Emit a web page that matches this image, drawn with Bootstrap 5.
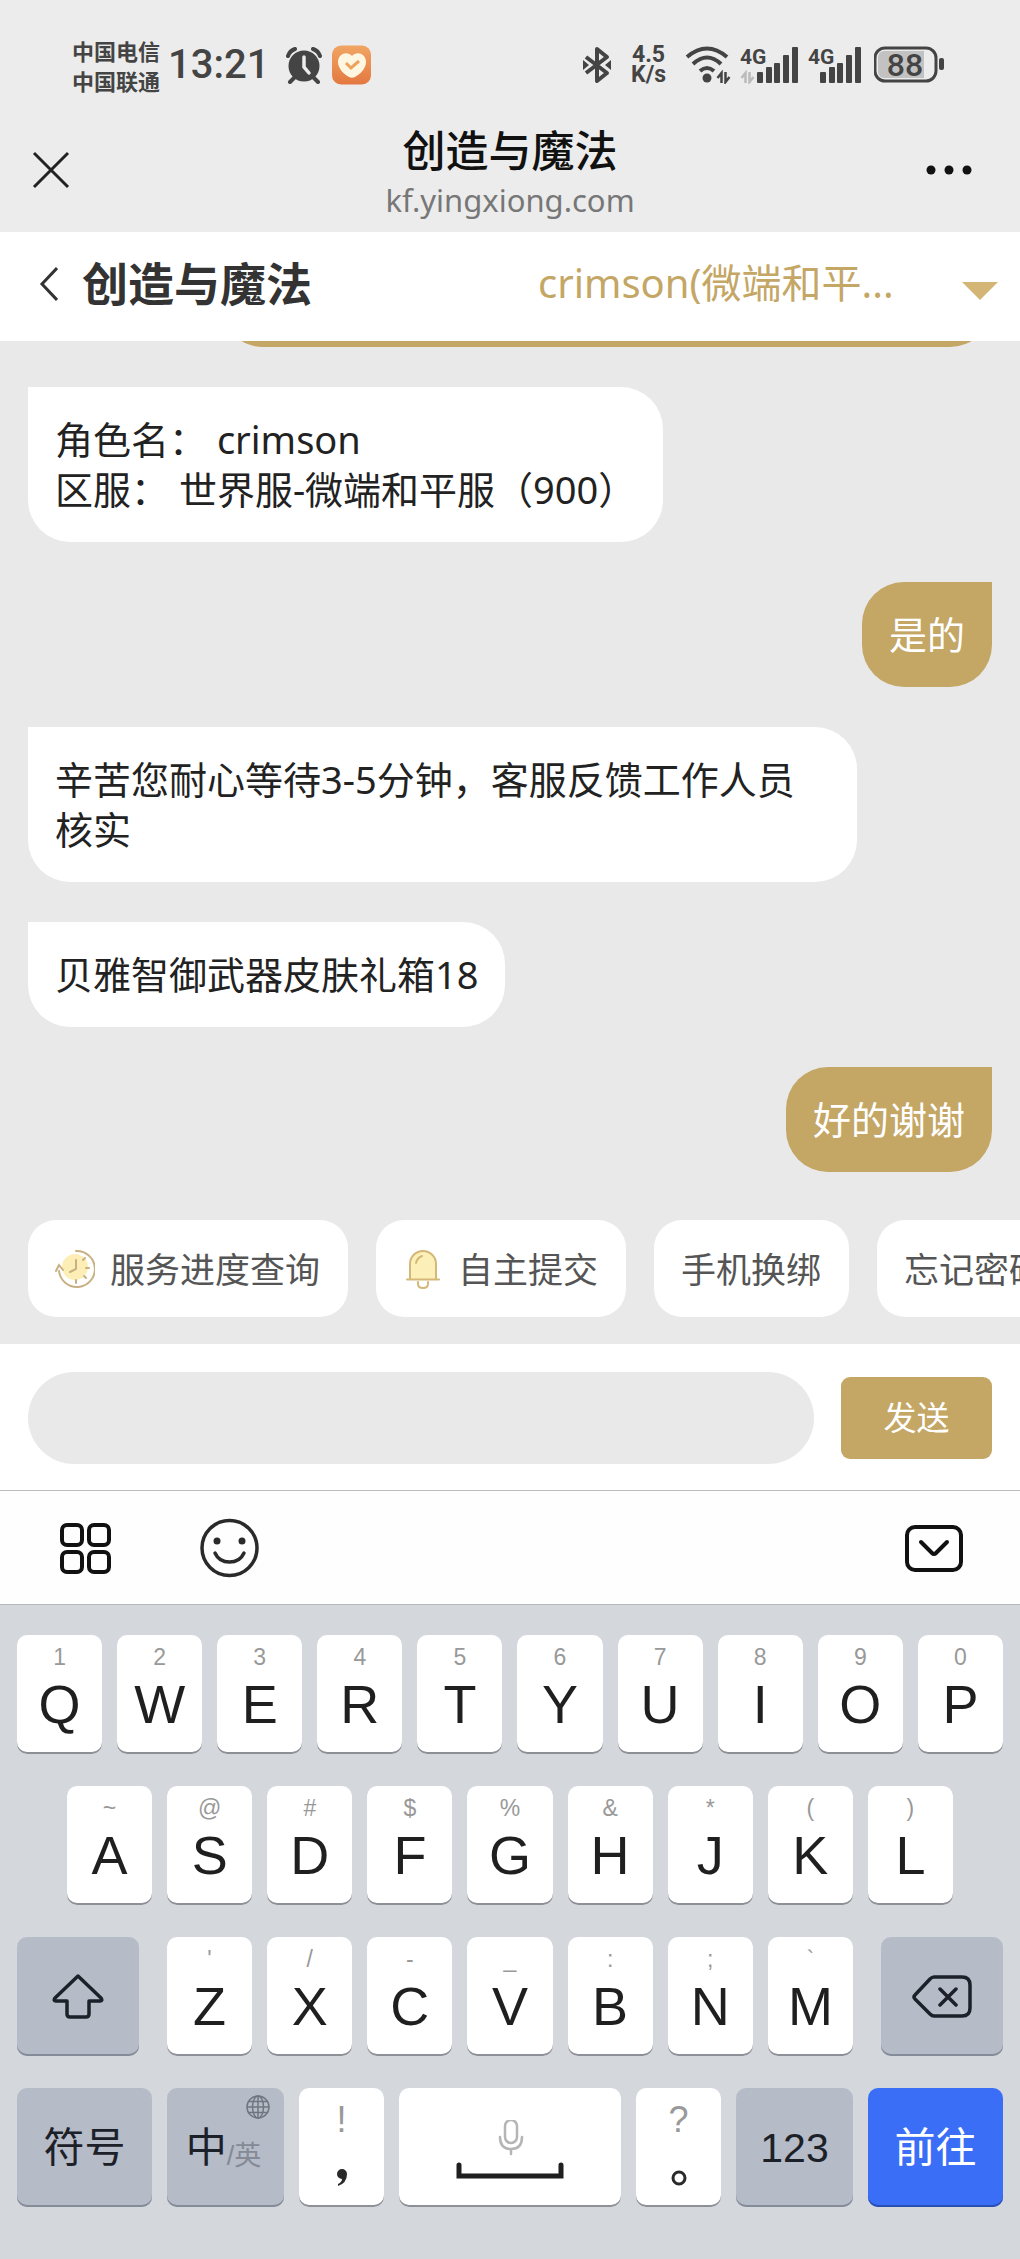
<!DOCTYPE html>
<html lang="zh-CN">
<head>
<meta charset="utf-8">
<meta name="viewport" content="width=device-width, initial-scale=1">
<title>创造与魔法</title>
<link href="https://cdn.jsdelivr.net/npm/bootstrap@5.3.0/dist/css/bootstrap.min.css" rel="stylesheet">
<style>
  :root { --gold: #c4a665; --page: #e9e9e9; --ink: #222; }
  body { font-family: "Noto Sans", "Noto Sans CJK SC", sans-serif; background: #d4d8dc; color: var(--ink); }
  svg { display: block; flex: none; }
  button { font-family: inherit; }
  .bare { background: none; border: 0; padding: 0; }

  .top-area { background: #ececec; }
  .status { height: 92px; padding: 38px 72px 0; color: #444; }
  .carriers { font-size: 22px; line-height: 30px; font-weight: 700; font-family: "Noto Sans CJK SC", sans-serif; }
  .time { font-family: Roboto, sans-serif; font-size: 40px; font-weight: 500; line-height: 54px; }
  .speed { font-family: Roboto, sans-serif; font-size: 23px; line-height: 20px; font-weight: 700; margin: 0 18px; }
  .cell { margin-left: 8px; }
  .battery { margin-left: 10px; }
  .titlebar { padding: 16px 48px 0 32px; height: 140px; }
  .titlebar h1 { font-size: 43px; line-height: 56px; margin: 0 0 4px; color: #111; font-weight: 400; font-family: "Noto Sans CJK SC", sans-serif; }
  .titlebar p { font-size: 31px; line-height: 40px; margin: 0; color: #777; }
  .close-page { width: 62px; }

  .game-bar { height: 109px; padding: 0 22px 8px 38px; }
  .game-bar h2 { font-size: 46px; line-height: 64px; font-weight: 700; color: #333; margin: 0; }
  .role-select { appearance: none; border: 0; background: none; color: var(--gold); font-size: 40px; line-height: 60px; padding: 0; width: 356px; }

  .chat { background: var(--page); padding: 0 28px 27px; overflow: hidden; }
  .bubbles { gap: 40px; }
  .bubble { background: #fff; border-radius: 0 42px 42px 42px; padding: 27px 27px 28px; font-size: 38px; line-height: 50px; max-width: 86%; align-self: flex-start; white-space: pre-wrap; }
  .bubble.mine { background: var(--gold); color: #fff; border-radius: 42px 0 42px 42px; align-self: flex-end; }
  .bubble.passed { width: 80%; height: 105px; margin-top: -99px; }

  .chips { gap: 28px; margin: 48px -28px 0 0; overflow: hidden; }
  .chip { background: #fff; border: 0; border-radius: 28px; padding: 0 28px 0 27px; height: 97px; font-family: "Noto Sans CJK SC", sans-serif; font-size: 35px; color: #555; gap: 15px; white-space: nowrap; flex: none; }

  .composer { background: #fff; padding: 28px 28px 26px; gap: 27px; border-bottom: 1px solid #bbb; }
  .composer .form-control { background: #e9e9e9; border: 0; height: 92px; font-size: 36px; padding: 0 40px; }
  .send { background: var(--gold); color: #fff; border: 0; border-radius: 9px; width: 151px; height: 82px; font-size: 33px; flex: none; }

  .tools { background: #fefefe; height: 114px; padding: 0 56px; gap: 84px; border-bottom: 1px solid #b4b9bc; }

  .keyboard { background: #d4d8dc; padding: 30px 17px 51px; gap: 32px; font-family: "Liberation Sans", "Noto Sans CJK SC", sans-serif; }
  .krow { gap: 15px; }
  .inset { padding: 0 50px; }
  .wide-gap { gap: 28px; }
  .key { background: #fff; border: 0; border-radius: 10px; box-shadow: inset 0 -2px 0 #8d9096; height: 119px; padding: 10px 0 0; color: #1f1f1f; font-size: 54px; line-height: 50px; gap: 10px; flex: 85 1 0; min-width: 0; }
  .key small { font-size: 23px; line-height: 24px; height: 24px; color: #999; }
  .key.fn { background: #b5bbc7; color: #1c2028; font-size: 41px; padding: 0; box-shadow: inset 0 -2px 0 #858b98; }
  .key.go { background: #3b6ef6; color: #fff; box-shadow: inset 0 -2px 0 #2a4fb4; }
  .w122 { flex-grow: 122; } .w135 { flex-grow: 135; } .w117 { flex-grow: 117; } .w222 { flex-grow: 222; } .w686 { flex: 686 1 0; }
  .key .alt { font-size: 27px; color: #858a96; line-height: 40px; align-self: flex-end; margin: 0 4px 31px 0; }
  .globe { position: absolute; top: 7px; right: 14px; }
  .key.punct small { font-size: 36px; line-height: 40px; height: 40px; margin-top: 2px; }
</style>
</head>
<body>

<header class="top-area">
  <div class="status d-flex align-items-center justify-content-between">
    <div class="d-flex align-items-center">
      <div class="carriers">中国电信<br>中国联通</div>
      <div class="time ms-2 me-3">13:21</div>
      <svg width="38" height="38" viewBox="0 0 38 38" fill="#444"><circle cx="18" cy="20" r="15.500"/><path d="M2 10A11 11 0 0 1 9 3M34 10A11 11 0 0 0 27 3M8 32l-4 4M28 32l4 4" stroke="#444" stroke-width="4" fill="none" stroke-linecap="round"/><path d="M18 11v10l5 6" stroke="#ececec" stroke-width="3.500" fill="none" stroke-linecap="round"/></svg>
      <svg class="ms-2" width="40" height="40" viewBox="0 0 40 40"><defs><linearGradient id="og" x1="0" y1="0" x2="0" y2="1"><stop offset="0" stop-color="#f0a562"/><stop offset="1" stop-color="#e47840"/></linearGradient></defs><rect width="39" height="39" y="0.500" rx="9" fill="url(#og)"/><path d="M20 11c-4-5-14-3-14 6 0 7 7 13 11 15q3 1.500 6 0c4-2 11-8 11-15 0-9-10-11-14-6z" fill="#fff6e2"/><path d="M14 18l5 5 8-7" fill="none" stroke="#eda35c" stroke-width="3"/></svg>
    </div>
    <div class="d-flex align-items-center">
      <svg width="30" height="38" viewBox="0 0 30 38"><path d="M3 11l21 16-10 8V3l10 8L3 27" fill="none" stroke="#444" stroke-width="4" stroke-linejoin="round"/><path d="M0 14l6 5-6 5zM28 14l-6 5 6 5z" fill="#444"/></svg>
      <div class="speed text-center">4.5<br>K/s</div>
      <svg width="48" height="38" viewBox="0 0 48 38" fill="none" stroke="#444" stroke-width="4"><path d="M3 11Q23-6 43 11M9 18Q23 5 37 18M16 25Q23 19 30 25"/><circle cx="23" cy="32" r="4.500" fill="#444" stroke="none"/><path d="M37.500 37V27l-4 5M41.500 26v10l4-5" stroke-width="2.500"/></svg>
      <svg class="cell" width="60" height="38" viewBox="0 0 60 38" fill="#444"><text x="0" y="18" font-family="Roboto, sans-serif" font-size="21" font-weight="700">4G</text><rect x="17" y="26" width="6" height="11" rx="1"/><rect x="26" y="21" width="6" height="16" rx="1"/><rect x="34" y="17" width="6" height="20" rx="1"/><rect x="43" y="9" width="6" height="28" rx="1"/><rect x="52" y="1" width="6" height="36" rx="1"/><path d="M5.500 37V27l-4 5M9.500 26v10l4-5" fill="none" stroke="#bbb" stroke-width="2.500"/></svg>
      <svg class="cell" width="56" height="38" viewBox="0 0 56 38" fill="#444"><text x="0" y="18" font-family="Roboto, sans-serif" font-size="21" font-weight="700">4G</text><rect x="12" y="26" width="6" height="11" rx="1"/><rect x="21" y="21" width="6" height="16" rx="1"/><rect x="29" y="17" width="6" height="20" rx="1"/><rect x="38" y="9" width="6" height="28" rx="1"/><rect x="47" y="1" width="6" height="36" rx="1"/></svg>
      <svg class="battery" width="74" height="38" viewBox="0 0 74 38"><rect x="1" y="2" width="61" height="33" rx="10" fill="none" stroke="#444" stroke-width="3"/><path d="M10 5h40v27H10a6 6 0 0 1-6-6V11a6 6 0 0 1 6-6z" fill="#c2c2c2"/><rect x="65" y="12" width="5" height="12" rx="2" fill="#444"/><text x="31" y="30" text-anchor="middle" font-family="Roboto, sans-serif" font-size="32" font-weight="500" fill="#444">88</text></svg>
    </div>
  </div>
  <div class="titlebar d-flex align-items-center justify-content-between">
    <button class="bare close-page" aria-label="关闭"><svg width="38" height="38" viewBox="0 0 38 38"><path d="M2 2l34 34M36 2L2 36" stroke="#222" stroke-width="3"/></svg></button>
    <div class="text-center">
      <h1 class="fw-medium">创造与魔法</h1>
      <p>kf.yingxiong.com</p>
    </div>
    <button class="bare" aria-label="更多"><svg width="46" height="12" viewBox="0 0 46 12" fill="#111"><circle cx="5" cy="6" r="4.500"/><circle cx="23" cy="6" r="4.500"/><circle cx="41" cy="6" r="4.500"/></svg></button>
  </div>
</header>

<nav class="game-bar bg-white d-flex align-items-center justify-content-between">
  <div class="d-flex align-items-center gap-4">
    <button class="bare" aria-label="返回"><svg width="20" height="36" viewBox="0 0 20 36"><path d="M19 3L4 19l15 16" fill="none" stroke="#333" stroke-width="3"/></svg></button>
    <h2>创造与魔法</h2>
  </div>
  <div class="d-flex align-items-center">
    <select class="role-select" aria-label="角色"><option>crimson(微端和平...</option></select>
    <svg class="ms-5 mt-3" width="56" height="18" viewBox="0 0 56 18"><path d="M20 0h36L38 18z" fill="#d3b676"/></svg>
  </div>
</nav>

<main class="chat">
  <div class="bubbles d-flex flex-column">
    <div class="bubble mine passed"></div>
    <div class="bubble">角色名： crimson
区服： 世界服-微端和平服（900）</div>
    <div class="bubble mine">是的</div>
    <div class="bubble">辛苦您耐心等待3-5分钟，客服反馈工作人员核实</div>
    <div class="bubble">贝雅智御武器皮肤礼箱18</div>
    <div class="bubble mine">好的谢谢</div>
  </div>
  <div class="chips d-flex">
    <button class="chip d-flex align-items-center">
      <svg width="40" height="40" viewBox="0 0 40 40" fill="none" stroke="#c9b083" stroke-width="2" stroke-linecap="round"><circle cx="20" cy="18" r="13" fill="#fdeeb5" stroke="none"/><path d="M21 2a18 18 0 1 1-17 20M1 22l3-6 4 5M21 11v9l-6 3M21 31v3M31 19h3M28 11l2-2M29 27l2 2"/></svg>
      服务进度查询</button>
    <button class="chip d-flex align-items-center">
      <svg width="40" height="40" viewBox="0 0 40 40" fill="none" stroke="#d3b878" stroke-width="2" stroke-linecap="round"><path d="M7 30V15a13 13 0 0 1 26 0v15" fill="#fdefb8"/><path d="M4 30.500h32M15 33v2q0 4 5 4t5-4v-2M13 14q1-5 6-7"/></svg>
      自主提交</button>
    <button class="chip">手机换绑</button>
    <button class="chip">忘记密码</button>
  </div>
</main>

<form class="composer d-flex align-items-center">
  <input class="form-control rounded-pill" type="text" aria-label="输入消息">
  <button class="send" type="button">发送</button>
</form>

<div class="tools d-flex align-items-center">
  <button class="bare" aria-label="功能"><svg width="60" height="60" viewBox="0 0 60 60" fill="none" stroke="#111" stroke-width="4"><rect x="6" y="7" width="20" height="20" rx="5"/><rect x="33" y="7" width="20" height="20" rx="5"/><rect x="6" y="34" width="20" height="20" rx="5"/><rect x="33" y="34" width="20" height="20" rx="5"/></svg></button>
  <button class="bare" aria-label="表情"><svg width="60" height="60" viewBox="0 0 60 60" fill="none" stroke="#2a2a2a" stroke-width="3.500"><circle cx="29.500" cy="30" r="27.500"/><circle cx="17" cy="23" r="3.500" fill="#2a2a2a" stroke="none"/><circle cx="42" cy="23" r="3.500" fill="#2a2a2a" stroke="none"/><path d="M15 35q4 9 14.500 9T44 35" stroke-linecap="round"/></svg></button>
  <button class="bare ms-auto" aria-label="收起键盘"><svg width="60" height="60" viewBox="0 0 60 60" fill="none" stroke="#111" stroke-width="4"><rect x="3" y="9" width="54" height="43" rx="8"/><path d="M17 24l11 11q2 2 4 0l11-11" stroke-linecap="round"/></svg></button>
</div>

<section class="keyboard d-flex flex-column" aria-label="键盘">
  <div class="krow d-flex">
    <button class="key d-flex flex-column align-items-center"><small>1</small>Q</button>
    <button class="key d-flex flex-column align-items-center"><small>2</small>W</button>
    <button class="key d-flex flex-column align-items-center"><small>3</small>E</button>
    <button class="key d-flex flex-column align-items-center"><small>4</small>R</button>
    <button class="key d-flex flex-column align-items-center"><small>5</small>T</button>
    <button class="key d-flex flex-column align-items-center"><small>6</small>Y</button>
    <button class="key d-flex flex-column align-items-center"><small>7</small>U</button>
    <button class="key d-flex flex-column align-items-center"><small>8</small>I</button>
    <button class="key d-flex flex-column align-items-center"><small>9</small>O</button>
    <button class="key d-flex flex-column align-items-center"><small>0</small>P</button>
  </div>
  <div class="krow inset d-flex">
    <button class="key d-flex flex-column align-items-center"><small>~</small>A</button>
    <button class="key d-flex flex-column align-items-center"><small>@</small>S</button>
    <button class="key d-flex flex-column align-items-center"><small>#</small>D</button>
    <button class="key d-flex flex-column align-items-center"><small>$</small>F</button>
    <button class="key d-flex flex-column align-items-center"><small>%</small>G</button>
    <button class="key d-flex flex-column align-items-center"><small>&amp;</small>H</button>
    <button class="key d-flex flex-column align-items-center"><small>*</small>J</button>
    <button class="key d-flex flex-column align-items-center"><small>(</small>K</button>
    <button class="key d-flex flex-column align-items-center"><small>)</small>L</button>
  </div>
  <div class="krow wide-gap d-flex">
    <button class="key fn w122 d-flex align-items-center justify-content-center" aria-label="大写"><svg width="52" height="46" viewBox="0 0 52 46"><path d="M26 2L3 24q-2 3 1 3h11v13q0 3 3 3h16q3 0 3-3V27h11q3 0 1-3z" fill="none" stroke="#1c2028" stroke-width="3.500" stroke-linejoin="round"/></svg></button>
    <div class="krow w686 d-flex">
      <button class="key d-flex flex-column align-items-center"><small>'</small>Z</button>
      <button class="key d-flex flex-column align-items-center"><small>/</small>X</button>
      <button class="key d-flex flex-column align-items-center"><small>-</small>C</button>
      <button class="key d-flex flex-column align-items-center"><small>_</small>V</button>
      <button class="key d-flex flex-column align-items-center"><small>:</small>B</button>
      <button class="key d-flex flex-column align-items-center"><small>;</small>N</button>
      <button class="key d-flex flex-column align-items-center"><small>`</small>M</button>
    </div>
    <button class="key fn w122 d-flex align-items-center justify-content-center" aria-label="删除"><svg width="60" height="46" viewBox="0 0 60 46"><path d="M22 3h28q8 0 8 8v23q0 8-8 8H22q-2 0-4-2L3 25q-2-2 0-4L18 5q2-2 4-2zM28 15l16 16M44 15L28 31" fill="none" stroke="#1c2028" stroke-width="3.500" stroke-linecap="round"/></svg></button>
  </div>
  <div class="krow d-flex">
    <button class="key fn w135">符号</button>
    <button class="key fn w117 position-relative d-flex align-items-center justify-content-center gap-0">中<span class="alt">/英</span>
      <svg class="globe" width="24" height="24" viewBox="0 0 24 24" fill="none" stroke="#70757f" stroke-width="1.500"><circle cx="12" cy="12" r="11"/><ellipse cx="12" cy="12" rx="5.500" ry="11"/><path d="M12 1v22M1 12h22M3 6.500h18M3 17.500h18"/></svg></button>
    <button class="key punct d-flex flex-column align-items-center" aria-label="逗号"><small>!</small><svg width="20" height="50" viewBox="0 0 20 50"><path d="M10 19a5 5 0 0 1 5 5q0 9-9 12v-2q4-2 4-5a5 5 0 0 1 0-10z" fill="#2a2a2a"/></svg></button>
    <button class="key w222 d-flex justify-content-center align-items-center" aria-label="空格"><svg width="108" height="66" viewBox="0 0 108 66" fill="none"><g stroke="#b5b5b5" stroke-width="2.500" stroke-linecap="round"><rect x="49" y="0" width="12" height="23" rx="6"/><path d="M44 17q0 12 11 12t11-12M55 29v5"/></g><path d="M3 45v11h102V45" stroke="#1f1f1f" stroke-width="5" stroke-linecap="round"/></svg></button>
    <button class="key punct d-flex flex-column align-items-center" aria-label="句号"><small>?</small><svg width="20" height="50" viewBox="0 0 20 50"><circle cx="10" cy="28" r="6" fill="none" stroke="#2a2a2a" stroke-width="3"/></svg></button>
    <button class="key fn w117">123</button>
    <button class="key fn go w135">前往</button>
  </div>
</section>

<script src="https://cdn.jsdelivr.net/npm/bootstrap@5.3.0/dist/js/bootstrap.bundle.min.js"></script>
</body>
</html>
